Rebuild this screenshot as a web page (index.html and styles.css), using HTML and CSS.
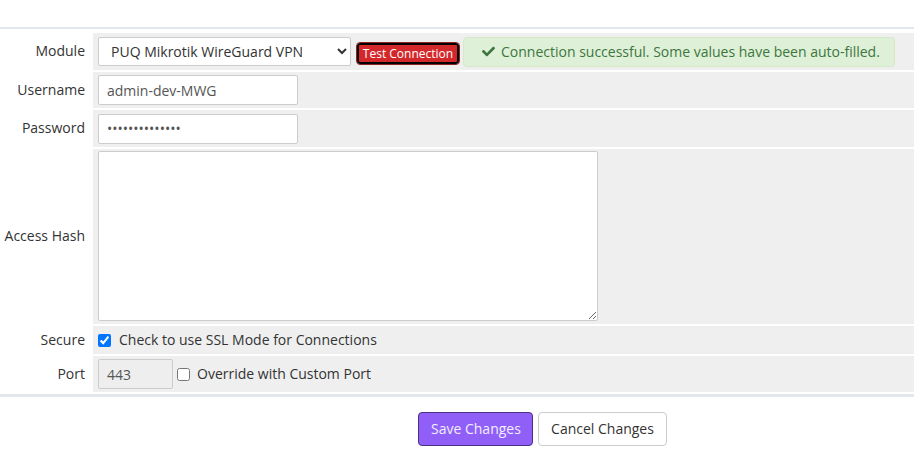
FILE: index.html
```html
<!DOCTYPE html>
<html>
<head>
<meta charset="utf-8">
<link rel="stylesheet" href="styles.css">
</head>
<body>
<div class="page">
  <div class="form">
    <div class="label">Module</div>
    <div class="field">
      <div class="select-wrap">
        <select class="select"><option>PUQ Mikrotik WireGuard VPN</option></select>
      </div>
      <button class="btn-test">Test Connection</button>
      <div class="alert">
        <svg class="check" viewBox="0 0 512 512" width="13" height="13"><path fill="#3c763d" d="M173.9 439.4l-166.4-166.4c-10-10-10-26.2 0-36.2l36.2-36.2c10-10 26.2-10 36.2 0L192 312.7 432.1 72.6c10-10 26.2-10 36.2 0l36.2 36.2c10 10 10 26.2 0 36.2l-294.4 294.4c-10 10-26.2 10-36.2 0z"/></svg>
        <span>Connection successful. Some values have been auto-filled.</span>
      </div>
    </div>

    <div class="label">Username</div>
    <div class="field"><input class="input w200" type="text" value="admin-dev-MWG"></div>

    <div class="label">Password</div>
    <div class="field"><input class="input w200 pw" type="password" value="abcdefghijklmn"></div>

    <div class="label">Access Hash</div>
    <div class="field field-hash"><textarea class="textarea"></textarea></div>

    <div class="label">Secure</div>
    <div class="field field-check">
      <label class="check-label"><input type="checkbox" class="cb" checked> Check to use SSL Mode for Connections</label>
    </div>

    <div class="label">Port</div>
    <div class="field">
      <input class="input port" type="text" value="443" disabled>
      <label class="check-label port-label"><input type="checkbox" class="cb"> Override with Custom Port</label>
    </div>
  </div>

  <div class="actions">
    <button class="btn btn-save">Save Changes</button>
    <button class="btn btn-cancel">Cancel Changes</button>
  </div>
</div>
</body>
</html>
```

FILE: styles.css
```css
* { box-sizing: border-box; }
html, body { margin: 0; padding: 0; background: #fff; }
body {
  font-family: "Open Sans", "Liberation Sans", sans-serif;
  font-size: 14px;
  color: #333;
}
.page { padding-top: 27px; }
.form {
  display: grid;
  grid-template-columns: 91px 1fr;
  grid-template-rows: 37px 36px 37px 175px 28px 36px;
  column-gap: 2px;
  row-gap: 2px;
  border-top: 2px solid #e4e8eb;
  border-bottom: 3px solid #e4e8eb;
  padding: 4px 0 2px 0;
}
.label {
  display: flex;
  align-items: center;
  justify-content: flex-end;
  padding-right: 6px;
  padding-bottom: 1px;
  color: #333;
  line-height: 20px;
}
.field {
  background: #efefef;
  display: flex;
  align-items: center;
  padding: 0 5px;
}
.field-hash { align-items: flex-start; padding-top: 2px; }
.select-wrap { display: flex; }
.select {
  width: 253px;
  height: 29px;
  margin: 0 0 1px 0;
  font-family: inherit;
  font-size: 14px;
  color: #333;
  background: #fff;
  border: 1px solid #ccc;
  border-radius: 2px;
  padding: 0 6px 0 8px;
}
.btn-test {
  margin-left: 6px;
  margin-top: 4px;
  width: 102px;
  height: 21px;
  padding: 0;
  font-family: inherit;
  font-size: 12px;
  line-height: 15px;
  color: #fff;
  background: #d3282b;
  border: 2px solid #000;
  outline: 1px solid #8e2323;
  outline-offset: 0;
  border-radius: 3px;
}
.alert {
  margin-left: 4px;
  width: 432px;
  height: 30px;
  display: flex;
  align-items: center;
  gap: 6px;
  padding: 0 15px 0 18px;
  background: #dff0d8;
  border: 1px solid #d6e9c6;
  border-radius: 4px;
  color: #3c763d;
  white-space: nowrap;
}
.check { flex: none; }
.input {
  height: 30px;
  margin: 0;
  border: 1px solid #ccc;
  border-radius: 2px;
  background: #fff;
  font-family: inherit;
  font-size: 14px;
  color: #555;
  padding: 0 8px;
}
.w200 { width: 200px; }
.pw { font-size: 14px; }
.textarea {
  display: block;
  width: 500px;
  height: 170px;
  margin: 0;
  border: 1px solid #ccc;
  border-radius: 2px;
  background: #fff;
  font-family: inherit;
  font-size: 14px;
}
.check-label {
  display: flex;
  align-items: center;
  gap: 8px;
  color: #333;
  line-height: 20px;
  white-space: nowrap;
}
.cb { margin: 0; width: 13px; height: 13px; }
.port { width: 75px; background: #eee; color: #555; padding: 0 8px; }
.port-label { margin-left: 4px; gap: 7px; }
.actions {
  display: flex;
  gap: 5px;
  padding: 15px 0 0 418px;
}
.btn {
  height: 34px;
  padding: 0 12px;
  font-family: inherit;
  font-size: 14px;
  border-radius: 4px;
  line-height: 20px;
  white-space: nowrap;
}
.btn-save {
  width: 115px;
  background: #8f5ff8;
  border: 1px solid #4b3083;
  color: #f3eeff;
}
.btn-cancel {
  width: 129px;
  background: #fff;
  border: 1px solid #ccc;
  color: #333;
}
```
